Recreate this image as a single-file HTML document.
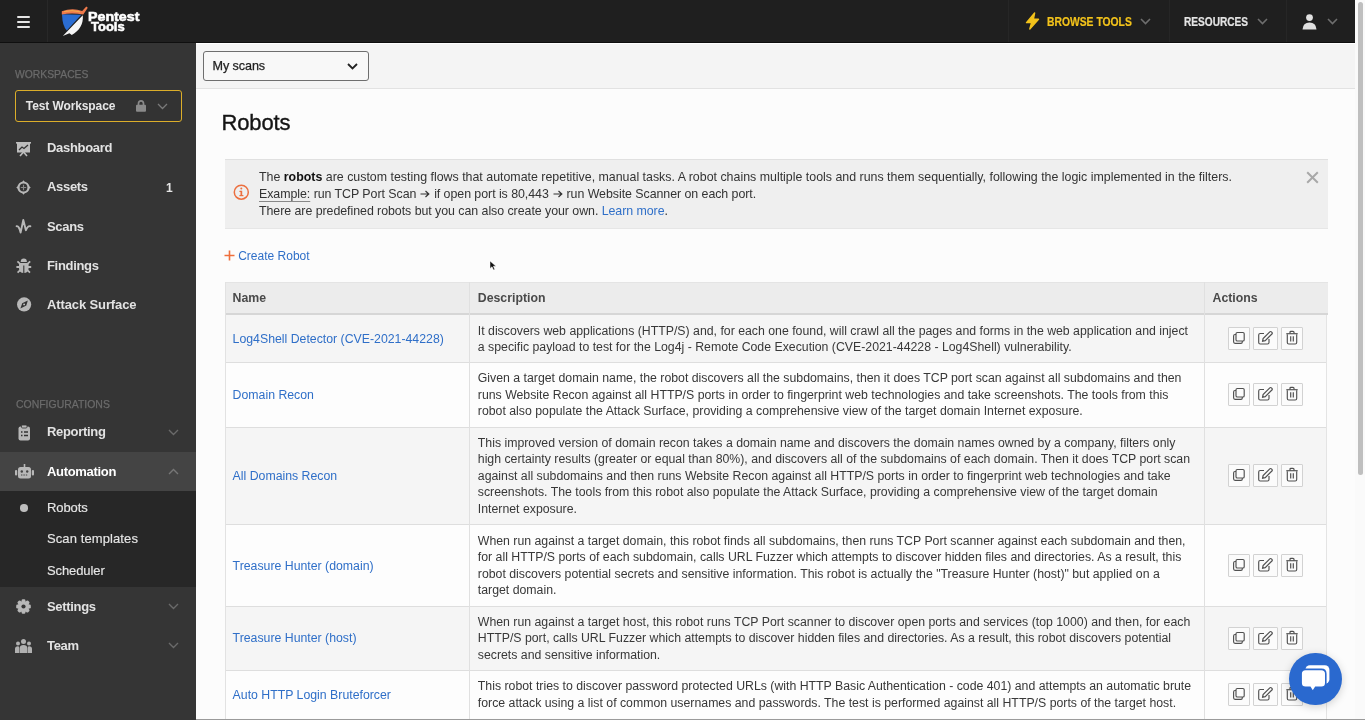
<!DOCTYPE html>
<html><head><meta charset="utf-8">
<style>
*{box-sizing:border-box;margin:0;padding:0}
html,body{width:1365px;height:720px;overflow:hidden;background:#fcfcfc;font-family:'Liberation Sans',sans-serif;color:#333}
.abs{position:absolute;white-space:nowrap}
body{-webkit-font-smoothing:antialiased}
#wrap{position:absolute;left:0;top:0;width:1365px;height:720px;will-change:transform}
svg.abs{overflow:visible}
</style></head><body><div id="wrap">
<div class="abs" style="left:0px;top:0px;width:1355px;height:43px;background:#1f1f1f;"></div>
<div class="abs" style="left:0px;top:42px;width:1355px;height:1px;background:#0f0f0f;"></div>
<div class="abs" style="left:0px;top:43px;width:196px;height:677px;background:#353535;"></div>
<div class="abs" style="left:196px;top:43px;width:1159px;height:677px;background:#fcfcfc;"></div>
<div class="abs" style="left:1355px;top:0px;width:10px;height:720px;background:#fafafa;"></div>
<div class="abs" style="left:1358px;top:2px;width:5px;height:473px;background:#bfbfbf;border-radius:3px"></div>
<div class="abs" style="left:17px;top:15.5px;width:13px;height:2.2px;background:#e4e4e4;border-radius:1px"></div>
<div class="abs" style="left:17px;top:20.5px;width:13px;height:2.2px;background:#e4e4e4;border-radius:1px"></div>
<div class="abs" style="left:17px;top:25.5px;width:13px;height:2.2px;background:#e4e4e4;border-radius:1px"></div>
<div class="abs" style="left:47px;top:0px;width:1px;height:42px;background:#282828;"></div>
<svg class="abs" style="left:55px;top:2px" width="40" height="40" viewBox="0 0 40 40"><path d="M7 12.3 L26.3 12.8 L11.8 28.6 Q7.3 24 7 12.3 Z" fill="#2b6dd2"/>
<path d="M27.8 13.3 C28.6 22 24.5 29 16.8 32.9 L14.4 31.3 L7.8 33.9 Z" fill="#f6f6f6"/>
<path d="M6.8 9.3 Q17 5.6 27.2 8.9 L31.3 4.6 L32.8 5.8 L28.3 12.6 Q17 10.4 6.8 12.5 Z" fill="#ef7a4c"/>
<path d="M9 9.6 Q17 7.6 25 9.8" fill="none" stroke="#f3b54a" stroke-width="0.9"/></svg>
<div class="abs" style="left:88.3px;top:9.53px;font:bold 12.6px/14px 'Liberation Sans',sans-serif;color:#fff;letter-spacing:0px;-webkit-text-stroke:0.55px #fff;transform:scaleX(1.13);transform-origin:0 0">Pentest</div>
<div class="abs" style="left:90.8px;top:19.93px;font:bold 12.6px/14px 'Liberation Sans',sans-serif;color:#fff;letter-spacing:0px;-webkit-text-stroke:0.55px #fff;transform:scaleX(1.03);transform-origin:0 0">Tools</div>
<div class="abs" style="left:1008px;top:0px;width:1px;height:42px;background:#262626;"></div>
<svg class="abs" style="left:1025px;top:12px" width="15" height="18" viewBox="0 0 15 18"><path d="M9.6 1 L1.5 10.6 L6.6 10.6 L4.8 17 L13.5 7.2 L8.4 7.2 Z" fill="#f2c21b" stroke="#f2c21b" stroke-width="1.4" stroke-linejoin="round"/></svg>
<div class="abs" style="left:1046.5px;top:15.07px;font:bold 12.2px/14px 'Liberation Sans',sans-serif;color:#f2c21b;letter-spacing:0px;-webkit-text-stroke:0.2px #f2c21b;transform:scaleX(0.848);transform-origin:0 0">BROWSE TOOLS</div>
<svg class="abs" style="left:1140px;top:18px" width="11" height="7" viewBox="0 0 11 7"><path d="M1 1 L5.5 5.5 L10 1" fill="none" stroke="#6e6e6e" stroke-width="1.6"/></svg>
<div class="abs" style="left:1169px;top:0px;width:1px;height:42px;background:#262626;"></div>
<div class="abs" style="left:1183.5px;top:14.87px;font:bold 12.2px/14px 'Liberation Sans',sans-serif;color:#e4e4e4;letter-spacing:0px;-webkit-text-stroke:0.2px #e4e4e4;transform:scaleX(0.83);transform-origin:0 0">RESOURCES</div>
<svg class="abs" style="left:1257px;top:18px" width="11" height="7" viewBox="0 0 11 7"><path d="M1 1 L5.5 5.5 L10 1" fill="none" stroke="#6e6e6e" stroke-width="1.6"/></svg>
<div class="abs" style="left:1286px;top:0px;width:1px;height:42px;background:#262626;"></div>
<svg class="abs" style="left:1302px;top:14px" width="15" height="16" viewBox="0 0 15 16"><circle cx="7.5" cy="3.6" r="3.4" fill="#e0e0e0"/><path d="M0.5 15.5 Q1 8.5 7.5 8.5 Q14 8.5 14.5 15.5 Z" fill="#e0e0e0"/></svg>
<svg class="abs" style="left:1327px;top:18px" width="11" height="7" viewBox="0 0 11 7"><path d="M1 1 L5.5 5.5 L10 1" fill="none" stroke="#6e6e6e" stroke-width="1.6"/></svg>
<div class="abs" style="left:15.3px;top:66.92px;font:normal 11.5px/14px 'Liberation Sans',sans-serif;color:#6b6b6b;letter-spacing:0px;transform:scaleX(0.9);transform-origin:0 0;-webkit-text-stroke:0.25px #6b6b6b">WORKSPACES</div>
<div class="abs" style="left:15px;top:89.5px;width:167px;height:32px;background:transparent;border:1.5px solid #dcae2a;border-radius:3px;background:#333333"></div>
<div class="abs" style="left:25.8px;top:98.84px;font:bold 12px/14px 'Liberation Sans',sans-serif;color:#e6e6e6;letter-spacing:-0.1px;">Test Workspace</div>
<svg class="abs" style="left:135px;top:99px" width="12" height="13" viewBox="0 0 12 13"><path d="M3.5 6 V4.5 Q3.5 1.8 6 1.8 Q8.5 1.8 8.5 4.5 V6" fill="none" stroke="#8a8a8a" stroke-width="1.7"/><rect x="1" y="5.8" width="10" height="7" rx="1" fill="#8a8a8a"/></svg>
<svg class="abs" style="left:157px;top:103px" width="11" height="7" viewBox="0 0 11 7"><path d="M1 1 L5.5 5.5 L10 1" fill="none" stroke="#7a7a7a" stroke-width="1.3"/></svg>
<div class="abs" style="left:47px;top:140.00px;font:bold 13px/16px 'Liberation Sans',sans-serif;color:#e2e2e2;letter-spacing:-0.32px;">Dashboard</div>
<svg class="abs" style="left:16.3px;top:141.7px" width="15" height="15" viewBox="0 0 15 15"><rect x="0" y="0" width="15" height="1.6" fill="#bdbdbd"/><rect x="1" y="1" width="13" height="9.5" fill="#bdbdbd"/><path d="M3 8 L6 5 L8 6.5 L12 3" fill="none" stroke="#333" stroke-width="1.3"/><path d="M4 14 L7.5 10 L11 14" fill="none" stroke="#bdbdbd" stroke-width="1.6"/></svg>
<div class="abs" style="left:47px;top:179.40px;font:bold 13px/16px 'Liberation Sans',sans-serif;color:#e2e2e2;letter-spacing:-0.32px;">Assets</div>
<svg class="abs" style="left:16.2px;top:179.8px" width="15" height="15" viewBox="0 0 15 15"><circle cx="7.5" cy="7.5" r="5" fill="none" stroke="#b8b8b8" stroke-width="2.2"/><path d="M5.8 2.6 L7.5 0.2 L9.2 2.6 Z M5.8 12.4 L7.5 14.8 L9.2 12.4 Z M2.6 5.8 L0.2 7.5 L2.6 9.2 Z M12.4 5.8 L14.8 7.5 L12.4 9.2 Z" fill="#b8b8b8"/><path d="M7.5 4.8 V10.2 M4.8 7.5 H10.2" stroke="#8a8a8a" stroke-width="1.1"/></svg>
<div class="abs" style="left:47px;top:219.00px;font:bold 13px/16px 'Liberation Sans',sans-serif;color:#e2e2e2;letter-spacing:-0.32px;">Scans</div>
<svg class="abs" style="left:16.3px;top:219.3px" width="15" height="15" viewBox="0 0 15 15"><path d="M0.6 7.2 Q3 6.6 4.6 13.6 L7.3 1 L9.9 11.2 Q11.6 6.6 14.4 7.2" fill="none" stroke="#b8b8b8" stroke-width="1.9" stroke-linejoin="round" stroke-linecap="round"/></svg>
<div class="abs" style="left:47px;top:257.50px;font:bold 13px/16px 'Liberation Sans',sans-serif;color:#e2e2e2;letter-spacing:-0.32px;">Findings</div>
<svg class="abs" style="left:16.3px;top:257.5px" width="15" height="15" viewBox="0 0 15 15"><path d="M4.7 4 Q4.7 0.6 7.8 0.6 Q10.9 0.6 10.9 4 Z" fill="#b8b8b8"/><path d="M3 4.9 H12.6 V10 Q12.6 15 7.8 15 Q3 15 3 10 Z" fill="#b8b8b8"/><path d="M1.4 3.3 L4.2 5.8 M14.2 3.3 L11.4 5.8 M0.4 9 H4 M15.2 9 H11.6 M1.6 14.6 L4.2 12.2 M14 14.6 L11.4 12.2" stroke="#b8b8b8" stroke-width="1.8"/><path d="M7.8 7.5 V15" stroke="#353535" stroke-width="1.1"/></svg>
<div class="abs" style="left:47px;top:296.50px;font:bold 13px/16px 'Liberation Sans',sans-serif;color:#e2e2e2;letter-spacing:-0.12px;">Attack Surface</div>
<svg class="abs" style="left:16.7px;top:297px" width="15" height="15" viewBox="0 0 15 15"><circle cx="7.1" cy="7.4" r="7.1" fill="#b8b8b8"/><path d="M10.8 3.4 L9.3 8.6 L3.4 11.4 L5.2 6.2 Z" fill="#333"/><circle cx="7.1" cy="7.4" r="0.9" fill="#c8c8c8"/></svg>
<div class="abs" style="left:165.9px;top:180.74px;font:bold 12px/14px 'Liberation Sans',sans-serif;color:#e6e6e6;letter-spacing:0px;">1</div>
<div class="abs" style="left:15.8px;top:397.09px;font:normal 11px/14px 'Liberation Sans',sans-serif;color:#6b6b6b;letter-spacing:0px;transform:scaleX(0.95);transform-origin:0 0;-webkit-text-stroke:0.25px #6b6b6b">CONFIGURATIONS</div>
<div class="abs" style="left:0px;top:452px;width:196px;height:39px;background:#444444;"></div>
<div class="abs" style="left:0px;top:491px;width:196px;height:96px;background:#272727;"></div>
<div class="abs" style="left:47px;top:424.20px;font:bold 13px/16px 'Liberation Sans',sans-serif;color:#e2e2e2;letter-spacing:-0.32px;">Reporting</div>
<div class="abs" style="left:47px;top:463.50px;font:bold 13px/16px 'Liberation Sans',sans-serif;color:#ffffff;letter-spacing:-0.32px;">Automation</div>
<div class="abs" style="left:47px;top:598.50px;font:bold 13px/16px 'Liberation Sans',sans-serif;color:#e2e2e2;letter-spacing:-0.32px;">Settings</div>
<div class="abs" style="left:47px;top:638.00px;font:bold 13px/16px 'Liberation Sans',sans-serif;color:#e2e2e2;letter-spacing:-0.32px;">Team</div>
<svg class="abs" style="left:168px;top:429px" width="11" height="7" viewBox="0 0 11 7"><path d="M1 1 L5.5 5.5 L10 1" fill="none" stroke="#6a6a6a" stroke-width="1.4"/></svg>
<svg class="abs" style="left:168px;top:468px" width="11" height="7" viewBox="0 0 11 7"><path d="M1 6 L5.5 1.5 L10 6" fill="none" stroke="#777" stroke-width="1.4"/></svg>
<svg class="abs" style="left:168px;top:603px" width="11" height="7" viewBox="0 0 11 7"><path d="M1 1 L5.5 5.5 L10 1" fill="none" stroke="#6a6a6a" stroke-width="1.4"/></svg>
<svg class="abs" style="left:168px;top:642px" width="11" height="7" viewBox="0 0 11 7"><path d="M1 1 L5.5 5.5 L10 1" fill="none" stroke="#6a6a6a" stroke-width="1.4"/></svg>
<svg class="abs" style="left:17.5px;top:425px" width="13" height="16" viewBox="0 0 13 16"><rect x="0.5" y="1.5" width="11.5" height="14" rx="2" fill="#b8b8b8"/><rect x="3.5" y="0" width="5.5" height="3" rx="1" fill="#b8b8b8" stroke="#333" stroke-width="0.8"/><path d="M3 7 H4.5 M6 7 H10 M3 10.5 H4.5 M6 10.5 H10" stroke="#333" stroke-width="1.3"/></svg>
<svg class="abs" style="left:14.8px;top:463.5px" width="19" height="15" viewBox="0 0 19 15"><rect x="3" y="3" width="13" height="11.5" rx="2.5" fill="#b8b8b8"/><rect x="0" y="6" width="2.2" height="5.5" rx="1" fill="#b8b8b8"/><rect x="16.8" y="6" width="2.2" height="5.5" rx="1" fill="#b8b8b8"/><rect x="8.7" y="0" width="1.6" height="3.5" fill="#b8b8b8"/><circle cx="6.8" cy="7.5" r="1.2" fill="#444"/><circle cx="12.2" cy="7.5" r="1.2" fill="#444"/><path d="M6 11 H13" stroke="#444" stroke-width="1" stroke-dasharray="1.4 1"/></svg>
<svg class="abs" style="left:16.3px;top:599px" width="15" height="15" viewBox="0 0 15 15"><g fill="#b8b8b8"><circle cx="7.5" cy="7.5" r="5.6"/><rect x="5.6" y="0.2" width="3.8" height="3.6" rx="1.2" transform="rotate(0 7.5 7.5)"/><rect x="5.6" y="0.2" width="3.8" height="3.6" rx="1.2" transform="rotate(45 7.5 7.5)"/><rect x="5.6" y="0.2" width="3.8" height="3.6" rx="1.2" transform="rotate(90 7.5 7.5)"/><rect x="5.6" y="0.2" width="3.8" height="3.6" rx="1.2" transform="rotate(135 7.5 7.5)"/><rect x="5.6" y="0.2" width="3.8" height="3.6" rx="1.2" transform="rotate(180 7.5 7.5)"/><rect x="5.6" y="0.2" width="3.8" height="3.6" rx="1.2" transform="rotate(225 7.5 7.5)"/><rect x="5.6" y="0.2" width="3.8" height="3.6" rx="1.2" transform="rotate(270 7.5 7.5)"/><rect x="5.6" y="0.2" width="3.8" height="3.6" rx="1.2" transform="rotate(315 7.5 7.5)"/></g><circle cx="7.5" cy="7.5" r="2.1" fill="#353535"/></svg>
<svg class="abs" style="left:15.3px;top:639px" width="17" height="14" viewBox="0 0 17 14"><g fill="#b0b0b0"><circle cx="8.5" cy="2.5" r="2.5"/><circle cx="3" cy="4.5" r="2"/><circle cx="14" cy="4.5" r="2"/><path d="M4.5 14 V9.5 Q4.5 6 8.5 6 Q12.5 6 12.5 9.5 V14Z"/><path d="M0 14 V10 Q0 7.2 3 7.2 Q4 7.2 4 8 V14Z"/><path d="M17 14 V10 Q17 7.2 14 7.2 Q13 7.2 13 8 V14Z"/></g></svg>
<div class="abs" style="left:20px;top:504px;width:7.5px;height:7.5px;background:#bdbdbd;border-radius:50%"></div>
<div class="abs" style="left:47px;top:499.50px;font:normal 13px/16px 'Liberation Sans',sans-serif;color:#e6e6e6;letter-spacing:-0.1px;-webkit-text-stroke:0.15px #e6e6e6">Robots</div>
<div class="abs" style="left:47px;top:531.30px;font:normal 13px/16px 'Liberation Sans',sans-serif;color:#e6e6e6;letter-spacing:0.1px;-webkit-text-stroke:0.15px #e6e6e6">Scan templates</div>
<div class="abs" style="left:47px;top:563.00px;font:normal 13px/16px 'Liberation Sans',sans-serif;color:#e6e6e6;letter-spacing:-0.1px;-webkit-text-stroke:0.15px #e6e6e6">Scheduler</div>
<div class="abs" style="left:196px;top:43px;width:1159px;height:45px;background:#f4f4f4;"></div>
<div class="abs" style="left:196px;top:43px;width:1159px;height:1px;background:#ffffff;"></div>
<div class="abs" style="left:196px;top:88px;width:1159px;height:1px;background:#e2e2e2;"></div>
<div class="abs" style="left:203px;top:51px;width:166px;height:30px;background:#f8f8f8;border:1px solid #6e6e6e;border-radius:3px"></div>
<div class="abs" style="left:212.6px;top:58.93px;font:normal 12.6px/15px 'Liberation Sans',sans-serif;color:#1e1e1e;letter-spacing:-0.1px;-webkit-text-stroke:0.25px #1e1e1e">My scans</div>
<svg class="abs" style="left:347px;top:63px" width="11" height="7" viewBox="0 0 11 7"><path d="M1 1 L5.5 5.5 L10 1" fill="none" stroke="#222" stroke-width="1.8"/></svg>
<div class="abs" style="left:221.5px;top:110.48px;font:normal 22px/26px 'Liberation Sans',sans-serif;color:#141414;letter-spacing:-0.15px;-webkit-text-stroke:0.35px #141414">Robots</div>
<div class="abs" style="left:225px;top:159px;width:1103px;height:70px;background:#efefef;border-top:1px solid #e0e0e0;border-bottom:1px solid #e6e6e6"></div>
<svg class="abs" style="left:233px;top:184px" width="17" height="17" viewBox="0 0 17 17"><circle cx="8.3" cy="8.2" r="7" fill="none" stroke="#ec6f3f" stroke-width="1.5"/><rect x="7.5" y="6.8" width="1.7" height="5" fill="#ec6f3f"/><rect x="6.4" y="6.8" width="2" height="1.2" fill="#ec6f3f"/><rect x="6.4" y="11" width="4" height="1.2" fill="#ec6f3f"/><circle cx="8.3" cy="4.6" r="1" fill="#ec6f3f"/></svg>
<div class="abs" style="left:259px;top:169.00px;font:normal 12.4px/17px 'Liberation Sans',sans-serif;color:#333;letter-spacing:0px;">The <b style="color:#111">robots</b> are custom testing flows that automate repetitive, manual tasks. A robot chains multiple tools and runs them sequentially, following the logic implemented in the filters.</div>
<div class="abs" style="left:259px;top:186.10px;font:normal 12.4px/17px 'Liberation Sans',sans-serif;color:#333;letter-spacing:-0.05px;"><span style="text-decoration:underline;text-decoration-color:#888;text-underline-offset:2.5px;text-decoration-thickness:1px">Example:</span> run TCP Port Scan <svg width="10" height="8" viewBox="0 0 10 8" style="display:inline-block;vertical-align:0px;margin:0 0.5px"><path d="M0.5 4 H8.8 M5.5 1 L8.8 4 L5.5 7" fill="none" stroke="#333" stroke-width="1.2"/></svg> if open port is 80,443 <svg width="10" height="8" viewBox="0 0 10 8" style="display:inline-block;vertical-align:0px;margin:0 0.5px"><path d="M0.5 4 H8.8 M5.5 1 L8.8 4 L5.5 7" fill="none" stroke="#333" stroke-width="1.2"/></svg> run Website Scanner on each port.</div>
<div class="abs" style="left:259px;top:203.20px;font:normal 12.4px/17px 'Liberation Sans',sans-serif;color:#333;letter-spacing:-0.05px;">There are predefined robots but you can also create your own. <span style="color:#2f6fc8">Learn more</span>.</div>
<svg class="abs" style="left:1306px;top:171px" width="13" height="13" viewBox="0 0 13 13"><path d="M1.2 1.2 L11.8 11.8 M11.8 1.2 L1.2 11.8" stroke="#a8a8a8" stroke-width="2"/></svg>
<svg class="abs" style="left:224px;top:250px" width="11" height="11" viewBox="0 0 11 11"><path d="M5.5 0.5 V10.5 M0.5 5.5 H10.5" stroke="#ef6f3c" stroke-width="1.6"/></svg>
<div class="abs" style="left:238.2px;top:248.74px;font:normal 12px/15px 'Liberation Sans',sans-serif;color:#2f6fc8;letter-spacing:0px;">Create Robot</div>
<svg class="abs" style="left:489px;top:260px" width="8" height="11" viewBox="0 0 8 11"><path d="M1 1 L1 8.5 L3 6.8 L4.5 10 L5.8 9.4 L4.4 6.2 L7 6.2 Z" fill="#111" stroke="#fff" stroke-width="0.5"/></svg>
<div class="abs" style="left:226px;top:282px;width:1102px;height:31px;background:#ececec;border-top:1px solid #e4e4e4"></div>
<div class="abs" style="left:226px;top:313px;width:1102px;height:2px;background:#d6d6d6;"></div>
<div class="abs" style="left:232.6px;top:291.14px;font:bold 12.3px/15px 'Liberation Sans',sans-serif;color:#4a4a4a;letter-spacing:0px;">Name</div>
<div class="abs" style="left:477.8px;top:291.14px;font:bold 12.3px/15px 'Liberation Sans',sans-serif;color:#4a4a4a;letter-spacing:0px;">Description</div>
<div class="abs" style="left:1212.5px;top:291.14px;font:bold 12.3px/15px 'Liberation Sans',sans-serif;color:#4a4a4a;letter-spacing:0px;">Actions</div>
<div class="abs" style="left:226px;top:315px;width:1101px;height:47px;background:#f5f5f5;"></div>
<div class="abs" style="left:226px;top:362px;width:1101px;height:65px;background:#fdfdfd;"></div>
<div class="abs" style="left:226px;top:362px;width:1101px;height:1px;background:#dedede;"></div>
<div class="abs" style="left:226px;top:427px;width:1101px;height:97px;background:#f5f5f5;"></div>
<div class="abs" style="left:226px;top:427px;width:1101px;height:1px;background:#dedede;"></div>
<div class="abs" style="left:226px;top:524px;width:1101px;height:82px;background:#fdfdfd;"></div>
<div class="abs" style="left:226px;top:524px;width:1101px;height:1px;background:#dedede;"></div>
<div class="abs" style="left:226px;top:606px;width:1101px;height:64px;background:#f5f5f5;"></div>
<div class="abs" style="left:226px;top:606px;width:1101px;height:1px;background:#dedede;"></div>
<div class="abs" style="left:226px;top:670px;width:1101px;height:48px;background:#fdfdfd;"></div>
<div class="abs" style="left:226px;top:670px;width:1101px;height:1px;background:#dedede;"></div>
<div class="abs" style="left:225px;top:282px;width:1px;height:437px;background:#e2e2e2;"></div>
<div class="abs" style="left:469px;top:282px;width:1px;height:437px;background:#e0e0e0;"></div>
<div class="abs" style="left:1204px;top:282px;width:1px;height:437px;background:#e0e0e0;"></div>
<div class="abs" style="left:1326px;top:315px;width:1px;height:404px;background:#e4e4e4;"></div>
<div class="abs" style="left:232.6px;top:331.94px;font:normal 12.3px/15px 'Liberation Sans',sans-serif;color:#2f6fc8;letter-spacing:0px;">Log4Shell Detector (CVE-2021-44228)</div>
<div class="abs" style="left:477.8px;top:323.54px;font:normal 12.3px/15px 'Liberation Sans',sans-serif;color:#383838;letter-spacing:0px;">It discovers web applications (HTTP/S) and, for each one found, will crawl all the pages and forms in the web application and inject</div>
<div class="abs" style="left:477.8px;top:339.99px;font:normal 12.3px/15px 'Liberation Sans',sans-serif;color:#383838;letter-spacing:0px;">a specific payload to test for the Log4j - Remote Code Execution (CVE-2021-44228 - Log4Shell) vulnerability.</div>
<div class="abs" style="left:1228px;top:327px;width:22px;height:23px;background:#fbfbfb;border:1px solid #d2d2d2;border-radius:1px"></div>
<div class="abs" style="left:1253px;top:327px;width:25px;height:23px;background:#fbfbfb;border:1px solid #d2d2d2;border-radius:1px"></div>
<div class="abs" style="left:1281px;top:327px;width:22px;height:23px;background:#fbfbfb;border:1px solid #d2d2d2;border-radius:1px"></div>
<svg class="abs" style="left:1232px;top:331px" width="14" height="14" viewBox="0 0 14 14"><rect x="4" y="1.5" width="8.2" height="8.5" rx="1.3" fill="none" stroke="#505050" stroke-width="1.15"/><path d="M4 3.5 H3 Q1.6 3.5 1.6 5 V10.8 Q1.6 12.3 3 12.3 H9 Q10.3 12.3 10.3 11 V10" fill="none" stroke="#505050" stroke-width="1.15"/></svg>
<svg class="abs" style="left:1257px;top:330px" width="17" height="15" viewBox="0 0 17 15"><path d="M7 3.5 H3.2 Q1.7 3.5 1.7 5 V12.5 Q1.7 14 3.2 14 H10.5 Q12 14 12 12.5 V9" fill="none" stroke="#505050" stroke-width="1.15"/><path d="M5.6 11.2 L6.1 8.6 L12.8 1.9 Q13.6 1.1 14.4 1.9 L14.9 2.4 Q15.7 3.2 14.9 4 L8.2 10.7 Z" fill="none" stroke="#505050" stroke-width="1.2"/></svg>
<svg class="abs" style="left:1286px;top:330px" width="12" height="15" viewBox="0 0 12 15"><path d="M1.3 4.3 V12.5 Q1.3 14 2.8 14 H9.2 Q10.7 14 10.7 12.5 V4.3" fill="none" stroke="#505050" stroke-width="1.15"/><path d="M0.3 3.7 H11.7" stroke="#505050" stroke-width="1.15"/><path d="M4 3.5 V2.2 Q4 1.3 5 1.3 H7 Q8 1.3 8 2.2 V3.5" fill="none" stroke="#505050" stroke-width="1.2"/><path d="M4.7 6.3 V11.5 M7.3 6.3 V11.5" stroke="#505050" stroke-width="1.2"/></svg>
<div class="abs" style="left:232.6px;top:388.34px;font:normal 12.3px/15px 'Liberation Sans',sans-serif;color:#2f6fc8;letter-spacing:0px;">Domain Recon</div>
<div class="abs" style="left:477.8px;top:371.34px;font:normal 12.3px/15px 'Liberation Sans',sans-serif;color:#383838;letter-spacing:0px;">Given a target domain name, the robot discovers all the subdomains, then it does TCP port scan against all subdomains and then</div>
<div class="abs" style="left:477.8px;top:387.79px;font:normal 12.3px/15px 'Liberation Sans',sans-serif;color:#383838;letter-spacing:0px;">runs Website Recon against all HTTP/S ports in order to fingerprint web technologies and take screenshots. The tools from this</div>
<div class="abs" style="left:477.8px;top:404.24px;font:normal 12.3px/15px 'Liberation Sans',sans-serif;color:#383838;letter-spacing:0px;">robot also populate the Attack Surface, providing a comprehensive view of the target domain Internet exposure.</div>
<div class="abs" style="left:1228px;top:383px;width:22px;height:23px;background:#fbfbfb;border:1px solid #d2d2d2;border-radius:1px"></div>
<div class="abs" style="left:1253px;top:383px;width:25px;height:23px;background:#fbfbfb;border:1px solid #d2d2d2;border-radius:1px"></div>
<div class="abs" style="left:1281px;top:383px;width:22px;height:23px;background:#fbfbfb;border:1px solid #d2d2d2;border-radius:1px"></div>
<svg class="abs" style="left:1232px;top:387px" width="14" height="14" viewBox="0 0 14 14"><rect x="4" y="1.5" width="8.2" height="8.5" rx="1.3" fill="none" stroke="#505050" stroke-width="1.15"/><path d="M4 3.5 H3 Q1.6 3.5 1.6 5 V10.8 Q1.6 12.3 3 12.3 H9 Q10.3 12.3 10.3 11 V10" fill="none" stroke="#505050" stroke-width="1.15"/></svg>
<svg class="abs" style="left:1257px;top:386px" width="17" height="15" viewBox="0 0 17 15"><path d="M7 3.5 H3.2 Q1.7 3.5 1.7 5 V12.5 Q1.7 14 3.2 14 H10.5 Q12 14 12 12.5 V9" fill="none" stroke="#505050" stroke-width="1.15"/><path d="M5.6 11.2 L6.1 8.6 L12.8 1.9 Q13.6 1.1 14.4 1.9 L14.9 2.4 Q15.7 3.2 14.9 4 L8.2 10.7 Z" fill="none" stroke="#505050" stroke-width="1.2"/></svg>
<svg class="abs" style="left:1286px;top:386px" width="12" height="15" viewBox="0 0 12 15"><path d="M1.3 4.3 V12.5 Q1.3 14 2.8 14 H9.2 Q10.7 14 10.7 12.5 V4.3" fill="none" stroke="#505050" stroke-width="1.15"/><path d="M0.3 3.7 H11.7" stroke="#505050" stroke-width="1.15"/><path d="M4 3.5 V2.2 Q4 1.3 5 1.3 H7 Q8 1.3 8 2.2 V3.5" fill="none" stroke="#505050" stroke-width="1.2"/><path d="M4.7 6.3 V11.5 M7.3 6.3 V11.5" stroke="#505050" stroke-width="1.2"/></svg>
<div class="abs" style="left:232.6px;top:469.34px;font:normal 12.3px/15px 'Liberation Sans',sans-serif;color:#2f6fc8;letter-spacing:0px;">All Domains Recon</div>
<div class="abs" style="left:477.8px;top:435.94px;font:normal 12.3px/15px 'Liberation Sans',sans-serif;color:#383838;letter-spacing:0px;">This improved version of domain recon takes a domain name and discovers the domain names owned by a company, filters only</div>
<div class="abs" style="left:477.8px;top:452.39px;font:normal 12.3px/15px 'Liberation Sans',sans-serif;color:#383838;letter-spacing:0px;">high certainty results (greater or equal than 80%), and discovers all of the subdomains of each domain. Then it does TCP port scan</div>
<div class="abs" style="left:477.8px;top:468.84px;font:normal 12.3px/15px 'Liberation Sans',sans-serif;color:#383838;letter-spacing:0px;">against all subdomains and then runs Website Recon against all HTTP/S ports in order to fingerprint web technologies and take</div>
<div class="abs" style="left:477.8px;top:485.29px;font:normal 12.3px/15px 'Liberation Sans',sans-serif;color:#383838;letter-spacing:0px;">screenshots. The tools from this robot also populate the Attack Surface, providing a comprehensive view of the target domain</div>
<div class="abs" style="left:477.8px;top:501.74px;font:normal 12.3px/15px 'Liberation Sans',sans-serif;color:#383838;letter-spacing:0px;">Internet exposure.</div>
<div class="abs" style="left:1228px;top:464px;width:22px;height:23px;background:#fbfbfb;border:1px solid #d2d2d2;border-radius:1px"></div>
<div class="abs" style="left:1253px;top:464px;width:25px;height:23px;background:#fbfbfb;border:1px solid #d2d2d2;border-radius:1px"></div>
<div class="abs" style="left:1281px;top:464px;width:22px;height:23px;background:#fbfbfb;border:1px solid #d2d2d2;border-radius:1px"></div>
<svg class="abs" style="left:1232px;top:468px" width="14" height="14" viewBox="0 0 14 14"><rect x="4" y="1.5" width="8.2" height="8.5" rx="1.3" fill="none" stroke="#505050" stroke-width="1.15"/><path d="M4 3.5 H3 Q1.6 3.5 1.6 5 V10.8 Q1.6 12.3 3 12.3 H9 Q10.3 12.3 10.3 11 V10" fill="none" stroke="#505050" stroke-width="1.15"/></svg>
<svg class="abs" style="left:1257px;top:467px" width="17" height="15" viewBox="0 0 17 15"><path d="M7 3.5 H3.2 Q1.7 3.5 1.7 5 V12.5 Q1.7 14 3.2 14 H10.5 Q12 14 12 12.5 V9" fill="none" stroke="#505050" stroke-width="1.15"/><path d="M5.6 11.2 L6.1 8.6 L12.8 1.9 Q13.6 1.1 14.4 1.9 L14.9 2.4 Q15.7 3.2 14.9 4 L8.2 10.7 Z" fill="none" stroke="#505050" stroke-width="1.2"/></svg>
<svg class="abs" style="left:1286px;top:467px" width="12" height="15" viewBox="0 0 12 15"><path d="M1.3 4.3 V12.5 Q1.3 14 2.8 14 H9.2 Q10.7 14 10.7 12.5 V4.3" fill="none" stroke="#505050" stroke-width="1.15"/><path d="M0.3 3.7 H11.7" stroke="#505050" stroke-width="1.15"/><path d="M4 3.5 V2.2 Q4 1.3 5 1.3 H7 Q8 1.3 8 2.2 V3.5" fill="none" stroke="#505050" stroke-width="1.2"/><path d="M4.7 6.3 V11.5 M7.3 6.3 V11.5" stroke="#505050" stroke-width="1.2"/></svg>
<div class="abs" style="left:232.6px;top:558.54px;font:normal 12.3px/15px 'Liberation Sans',sans-serif;color:#2f6fc8;letter-spacing:0px;">Treasure Hunter (domain)</div>
<div class="abs" style="left:477.8px;top:533.84px;font:normal 12.3px/15px 'Liberation Sans',sans-serif;color:#383838;letter-spacing:0px;">When run against a target domain, this robot finds all subdomains, then runs TCP Port scanner against each subdomain and then,</div>
<div class="abs" style="left:477.8px;top:550.29px;font:normal 12.3px/15px 'Liberation Sans',sans-serif;color:#383838;letter-spacing:0px;">for all HTTP/S ports of each subdomain, calls URL Fuzzer which attempts to discover hidden files and directories. As a result, this</div>
<div class="abs" style="left:477.8px;top:566.74px;font:normal 12.3px/15px 'Liberation Sans',sans-serif;color:#383838;letter-spacing:0px;">robot discovers potential secrets and sensitive information. This robot is actually the "Treasure Hunter (host)" but applied on a</div>
<div class="abs" style="left:477.8px;top:583.19px;font:normal 12.3px/15px 'Liberation Sans',sans-serif;color:#383838;letter-spacing:0px;">target domain.</div>
<div class="abs" style="left:1228px;top:554px;width:22px;height:23px;background:#fbfbfb;border:1px solid #d2d2d2;border-radius:1px"></div>
<div class="abs" style="left:1253px;top:554px;width:25px;height:23px;background:#fbfbfb;border:1px solid #d2d2d2;border-radius:1px"></div>
<div class="abs" style="left:1281px;top:554px;width:22px;height:23px;background:#fbfbfb;border:1px solid #d2d2d2;border-radius:1px"></div>
<svg class="abs" style="left:1232px;top:558px" width="14" height="14" viewBox="0 0 14 14"><rect x="4" y="1.5" width="8.2" height="8.5" rx="1.3" fill="none" stroke="#505050" stroke-width="1.15"/><path d="M4 3.5 H3 Q1.6 3.5 1.6 5 V10.8 Q1.6 12.3 3 12.3 H9 Q10.3 12.3 10.3 11 V10" fill="none" stroke="#505050" stroke-width="1.15"/></svg>
<svg class="abs" style="left:1257px;top:557px" width="17" height="15" viewBox="0 0 17 15"><path d="M7 3.5 H3.2 Q1.7 3.5 1.7 5 V12.5 Q1.7 14 3.2 14 H10.5 Q12 14 12 12.5 V9" fill="none" stroke="#505050" stroke-width="1.15"/><path d="M5.6 11.2 L6.1 8.6 L12.8 1.9 Q13.6 1.1 14.4 1.9 L14.9 2.4 Q15.7 3.2 14.9 4 L8.2 10.7 Z" fill="none" stroke="#505050" stroke-width="1.2"/></svg>
<svg class="abs" style="left:1286px;top:557px" width="12" height="15" viewBox="0 0 12 15"><path d="M1.3 4.3 V12.5 Q1.3 14 2.8 14 H9.2 Q10.7 14 10.7 12.5 V4.3" fill="none" stroke="#505050" stroke-width="1.15"/><path d="M0.3 3.7 H11.7" stroke="#505050" stroke-width="1.15"/><path d="M4 3.5 V2.2 Q4 1.3 5 1.3 H7 Q8 1.3 8 2.2 V3.5" fill="none" stroke="#505050" stroke-width="1.2"/><path d="M4.7 6.3 V11.5 M7.3 6.3 V11.5" stroke="#505050" stroke-width="1.2"/></svg>
<div class="abs" style="left:232.6px;top:631.44px;font:normal 12.3px/15px 'Liberation Sans',sans-serif;color:#2f6fc8;letter-spacing:0px;">Treasure Hunter (host)</div>
<div class="abs" style="left:477.8px;top:615.04px;font:normal 12.3px/15px 'Liberation Sans',sans-serif;color:#383838;letter-spacing:0px;">When run against a target host, this robot runs TCP Port scanner to discover open ports and services (top 1000) and then, for each</div>
<div class="abs" style="left:477.8px;top:631.49px;font:normal 12.3px/15px 'Liberation Sans',sans-serif;color:#383838;letter-spacing:0px;">HTTP/S port, calls URL Fuzzer which attempts to discover hidden files and directories. As a result, this robot discovers potential</div>
<div class="abs" style="left:477.8px;top:647.94px;font:normal 12.3px/15px 'Liberation Sans',sans-serif;color:#383838;letter-spacing:0px;">secrets and sensitive information.</div>
<div class="abs" style="left:1228px;top:627px;width:22px;height:23px;background:#fbfbfb;border:1px solid #d2d2d2;border-radius:1px"></div>
<div class="abs" style="left:1253px;top:627px;width:25px;height:23px;background:#fbfbfb;border:1px solid #d2d2d2;border-radius:1px"></div>
<div class="abs" style="left:1281px;top:627px;width:22px;height:23px;background:#fbfbfb;border:1px solid #d2d2d2;border-radius:1px"></div>
<svg class="abs" style="left:1232px;top:631px" width="14" height="14" viewBox="0 0 14 14"><rect x="4" y="1.5" width="8.2" height="8.5" rx="1.3" fill="none" stroke="#505050" stroke-width="1.15"/><path d="M4 3.5 H3 Q1.6 3.5 1.6 5 V10.8 Q1.6 12.3 3 12.3 H9 Q10.3 12.3 10.3 11 V10" fill="none" stroke="#505050" stroke-width="1.15"/></svg>
<svg class="abs" style="left:1257px;top:630px" width="17" height="15" viewBox="0 0 17 15"><path d="M7 3.5 H3.2 Q1.7 3.5 1.7 5 V12.5 Q1.7 14 3.2 14 H10.5 Q12 14 12 12.5 V9" fill="none" stroke="#505050" stroke-width="1.15"/><path d="M5.6 11.2 L6.1 8.6 L12.8 1.9 Q13.6 1.1 14.4 1.9 L14.9 2.4 Q15.7 3.2 14.9 4 L8.2 10.7 Z" fill="none" stroke="#505050" stroke-width="1.2"/></svg>
<svg class="abs" style="left:1286px;top:630px" width="12" height="15" viewBox="0 0 12 15"><path d="M1.3 4.3 V12.5 Q1.3 14 2.8 14 H9.2 Q10.7 14 10.7 12.5 V4.3" fill="none" stroke="#505050" stroke-width="1.15"/><path d="M0.3 3.7 H11.7" stroke="#505050" stroke-width="1.15"/><path d="M4 3.5 V2.2 Q4 1.3 5 1.3 H7 Q8 1.3 8 2.2 V3.5" fill="none" stroke="#505050" stroke-width="1.2"/><path d="M4.7 6.3 V11.5 M7.3 6.3 V11.5" stroke="#505050" stroke-width="1.2"/></svg>
<div class="abs" style="left:232.6px;top:687.64px;font:normal 12.3px/15px 'Liberation Sans',sans-serif;color:#2f6fc8;letter-spacing:0px;">Auto HTTP Login Bruteforcer</div>
<div class="abs" style="left:477.8px;top:679.34px;font:normal 12.3px/15px 'Liberation Sans',sans-serif;color:#383838;letter-spacing:0px;">This robot tries to discover password protected URLs (with HTTP Basic Authentication - code 401) and attempts an automatic brute</div>
<div class="abs" style="left:477.8px;top:695.79px;font:normal 12.3px/15px 'Liberation Sans',sans-serif;color:#383838;letter-spacing:0px;">force attack using a list of common usernames and passwords. The test is performed against all HTTP/S ports of the target host.</div>
<div class="abs" style="left:1228px;top:683px;width:22px;height:23px;background:#fbfbfb;border:1px solid #d2d2d2;border-radius:1px"></div>
<div class="abs" style="left:1253px;top:683px;width:25px;height:23px;background:#fbfbfb;border:1px solid #d2d2d2;border-radius:1px"></div>
<div class="abs" style="left:1281px;top:683px;width:22px;height:23px;background:#fbfbfb;border:1px solid #d2d2d2;border-radius:1px"></div>
<svg class="abs" style="left:1232px;top:687px" width="14" height="14" viewBox="0 0 14 14"><rect x="4" y="1.5" width="8.2" height="8.5" rx="1.3" fill="none" stroke="#505050" stroke-width="1.15"/><path d="M4 3.5 H3 Q1.6 3.5 1.6 5 V10.8 Q1.6 12.3 3 12.3 H9 Q10.3 12.3 10.3 11 V10" fill="none" stroke="#505050" stroke-width="1.15"/></svg>
<svg class="abs" style="left:1257px;top:686px" width="17" height="15" viewBox="0 0 17 15"><path d="M7 3.5 H3.2 Q1.7 3.5 1.7 5 V12.5 Q1.7 14 3.2 14 H10.5 Q12 14 12 12.5 V9" fill="none" stroke="#505050" stroke-width="1.15"/><path d="M5.6 11.2 L6.1 8.6 L12.8 1.9 Q13.6 1.1 14.4 1.9 L14.9 2.4 Q15.7 3.2 14.9 4 L8.2 10.7 Z" fill="none" stroke="#505050" stroke-width="1.2"/></svg>
<svg class="abs" style="left:1286px;top:686px" width="12" height="15" viewBox="0 0 12 15"><path d="M1.3 4.3 V12.5 Q1.3 14 2.8 14 H9.2 Q10.7 14 10.7 12.5 V4.3" fill="none" stroke="#505050" stroke-width="1.15"/><path d="M0.3 3.7 H11.7" stroke="#505050" stroke-width="1.15"/><path d="M4 3.5 V2.2 Q4 1.3 5 1.3 H7 Q8 1.3 8 2.2 V3.5" fill="none" stroke="#505050" stroke-width="1.2"/><path d="M4.7 6.3 V11.5 M7.3 6.3 V11.5" stroke="#505050" stroke-width="1.2"/></svg>
<div class="abs" style="left:1289px;top:652.5px;width:52.5px;height:52.5px;border-radius:50%;background:#2a69cf;box-shadow:0 2px 8px rgba(0,0,0,0.18)"></div>
<svg class="abs" style="left:1299px;top:663px" width="32" height="32" viewBox="0 0 32 32"><rect x="6.4" y="2.2" width="24" height="18.6" rx="4.5" fill="#fff"/><path d="M6.5 6.4 H22.4 Q26.8 6.4 26.8 10.8 V20 Q26.8 24.4 22.4 24.4 H16.6 L13.8 28.8 L11 24.4 H6.5 Q2.1 24.4 2.1 20 V10.8 Q2.1 6.4 6.5 6.4Z" fill="#fff" stroke="#2a69cf" stroke-width="1.6"/></svg>
<div class="abs" style="left:196px;top:718.5px;width:1169px;height:1.5px;background:#9a9a9a;"></div>
</div></body></html>
